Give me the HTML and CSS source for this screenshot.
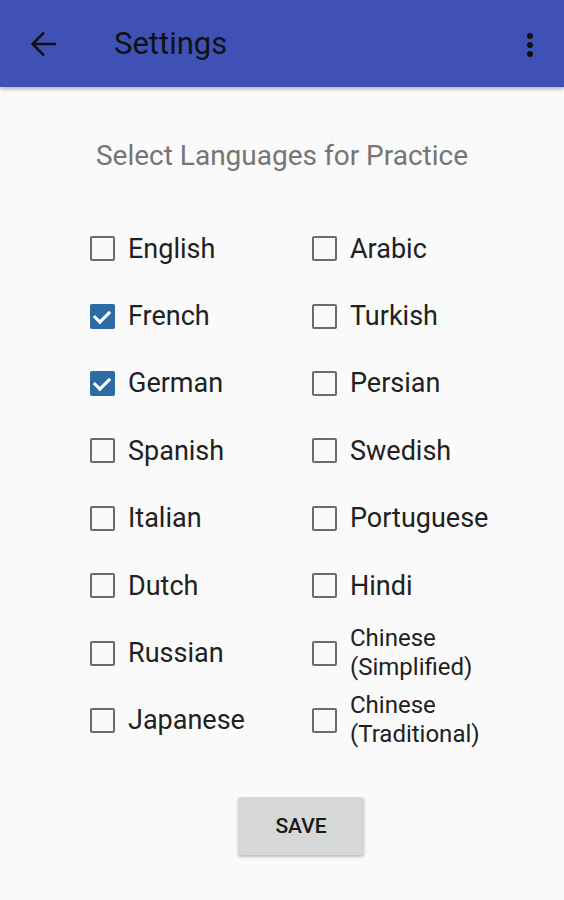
FILE: index.html
```html
<!DOCTYPE html>
<html lang="en">

<head>
    <meta charset="UTF-8">
    <meta name="viewport" content="width=device-width, initial-scale=1.0">
    <title>Settings</title>
    <link rel="stylesheet" href="styles.css">
</head>

<body>
    <!-- App bar -->
    <header class="app-bar">
        <button class="icon-btn back-btn" aria-label="Back">
            <svg width="26" height="26" viewBox="0 0 26 26">
                <path d="M25 13H2M13 1.5L1.5 13L13 24.5" fill="none" stroke="#111" stroke-width="2.6"/>
            </svg>
        </button>
        <h1 class="app-title">Settings</h1>
        <button class="icon-btn menu-btn" aria-label="More options">
            <svg width="8" height="26" viewBox="0 0 8 26">
                <circle cx="4" cy="4" r="3" fill="#111"/>
                <circle cx="4" cy="13" r="3" fill="#111"/>
                <circle cx="4" cy="22" r="3" fill="#111"/>
            </svg>
        </button>
    </header>

    <!-- Language picker -->
    <main class="content">
        <h2 class="section-title">Select Languages for Practice</h2>

        <div class="lang-grid">
            <label class="lang"><input type="checkbox"><span class="box"></span><span class="name">English</span></label>
            <label class="lang"><input type="checkbox"><span class="box"></span><span class="name">Arabic</span></label>
            <label class="lang"><input type="checkbox" checked><span class="box"></span><span class="name">French</span></label>
            <label class="lang"><input type="checkbox"><span class="box"></span><span class="name">Turkish</span></label>
            <label class="lang"><input type="checkbox" checked><span class="box"></span><span class="name">German</span></label>
            <label class="lang"><input type="checkbox"><span class="box"></span><span class="name">Persian</span></label>
            <label class="lang"><input type="checkbox"><span class="box"></span><span class="name">Spanish</span></label>
            <label class="lang"><input type="checkbox"><span class="box"></span><span class="name">Swedish</span></label>
            <label class="lang"><input type="checkbox"><span class="box"></span><span class="name">Italian</span></label>
            <label class="lang"><input type="checkbox"><span class="box"></span><span class="name">Portuguese</span></label>
            <label class="lang"><input type="checkbox"><span class="box"></span><span class="name">Dutch</span></label>
            <label class="lang"><input type="checkbox"><span class="box"></span><span class="name">Hindi</span></label>
            <label class="lang"><input type="checkbox"><span class="box"></span><span class="name">Russian</span></label>
            <label class="lang"><input type="checkbox"><span class="box"></span><span class="name two-line">Chinese<br>(Simplified)</span></label>
            <label class="lang"><input type="checkbox"><span class="box"></span><span class="name">Japanese</span></label>
            <label class="lang"><input type="checkbox"><span class="box"></span><span class="name two-line">Chinese<br>(Traditional)</span></label>
        </div>

        <div class="actions">
            <button class="save-btn">SAVE</button>
        </div>
    </main>
</body>

</html>
```

FILE: styles.css
```css
/* Base styling */
body {
    font-family: Roboto, 'Noto Sans', Arial, sans-serif;
    margin: 0;
    padding: 0;
    background-color: #fafafa;
    color: #212121;
    height: 900px;
    overflow: hidden;
}

/* App bar */
.app-bar {
    height: 87px;
    background-color: #3f51b5;
    display: flex;
    align-items: center;
    box-shadow: 0 2px 4px rgba(0, 0, 0, 0.3);
    position: relative;
    z-index: 1;
}

.icon-btn {
    background: none;
    border: none;
    padding: 0;
    display: flex;
    align-items: center;
    justify-content: center;
    cursor: pointer;
}

.back-btn {
    width: 26px;
    height: 26px;
    margin-left: 31px;
    margin-top: 1px;
}

.app-title {
    font-size: 31px;
    font-weight: 400;
    color: #111;
    margin: 0 0 0 57px;
    flex: 1;
}

.menu-btn {
    width: 8px;
    height: 26px;
    margin-right: 30px;
    margin-top: 2px;
}

/* Content */
.content {
    padding-top: 52px;
}

.section-title {
    font-size: 28px;
    line-height: 33px;
    font-weight: 400;
    color: #757575;
    text-align: center;
    margin: 0 0 43px 0;
}

/* Checkbox grid */
.lang-grid {
    display: grid;
    grid-template-columns: 222px 222px;
    grid-auto-rows: 67.4px;
    padding-left: 90px;
}

.lang {
    display: flex;
    align-items: center;
    gap: 13px;
    cursor: pointer;
}

.lang input {
    display: none;
}

.box {
    flex: none;
    width: 21px;
    height: 21px;
    border: 2.5px solid #6b6b6b;
    border-radius: 2px;
    position: relative;
}

.lang input:checked + .box {
    background-color: #2c6ba6;
    border-color: #2c6ba6;
}

.lang input:checked + .box:after {
    content: '';
    position: absolute;
    left: 5px;
    top: 1px;
    width: 7px;
    height: 13px;
    border: solid #fff;
    border-width: 0 3px 3px 0;
    transform: rotate(45deg);
}

.name {
    font-size: 27px;
    line-height: 32px;
    color: #212121;
}

.name.two-line {
    font-size: 24px;
    line-height: 29px;
}

/* Save button */
.actions {
    display: flex;
    justify-content: center;
    padding-top: 43px;
    padding-left: 38px;
}

.save-btn {
    width: 126px;
    height: 58px;
    background-color: #d6d7d7;
    border: none;
    border-radius: 3px;
    box-shadow: 0 2px 3px rgba(0, 0, 0, 0.25);
    font-family: Roboto, Arial, sans-serif;
    font-size: 21px;
    font-weight: 500;
    color: #1a1a1a;
    cursor: pointer;
}
```
